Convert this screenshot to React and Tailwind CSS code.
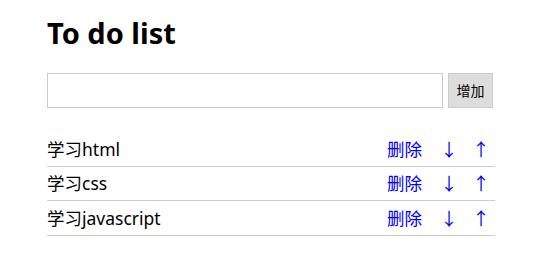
const todos = ['学习html', '学习css', '学习javascript']

export default function App() {
  return (
    <div className="w-[533px] h-[266px] bg-white" style={{ fontFamily: '"Noto Sans", "Noto Sans CJK SC", sans-serif' }}>
      <div className="ml-[47px] w-[448px] pt-[12px]">
        <h1 className="text-[29px] font-bold leading-[41px] text-black">To do list</h1>
        <div className="flex items-center mt-[20px]">
          <input className="w-[396px] h-[35px] border border-[#ccc] outline-none px-2" />
          <button className="ml-[5px] h-[35px] w-[45px] bg-[#ddd] border border-[#ccc] text-[14px] text-black">增加</button>
        </div>
        <ul className="mt-[24px]">
          {todos.map((t) => (
            <li key={t} className="flex items-center h-[34.5px] border-b border-[#ccc] text-[17.5px] text-black">
              <span className="flex-1">{t}</span>
              <span className="text-[#0000ff]">删除</span>
              <span className="ml-[21px] w-[12px] flex justify-center text-[#0000ff]">↓</span>
              <span className="ml-[20px] mr-[8px] w-[12px] flex justify-center text-[#0000ff]">↑</span>
            </li>
          ))}
        </ul>
      </div>
    </div>
  )
}
